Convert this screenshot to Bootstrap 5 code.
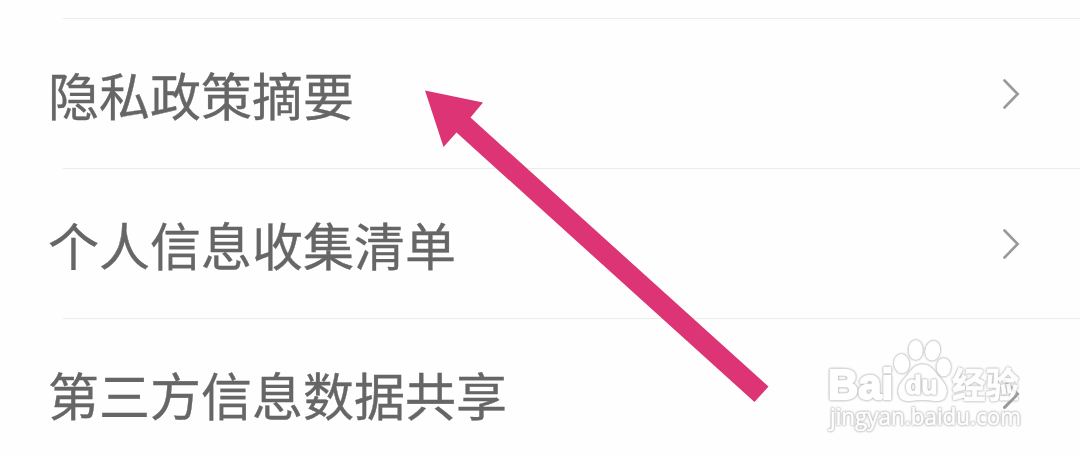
<!DOCTYPE html>
<html lang="zh-CN">
<head>
  <meta charset="UTF-8" />
  <meta name="viewport" content="width=device-width, initial-scale=1.0"/>
  <title>隐私设置</title>
  <link href="https://cdn.jsdelivr.net/npm/bootstrap@5.3.2/dist/css/bootstrap.min.css" rel="stylesheet">
  <style>
    body {
      background-color: #fefefe;
      font-family: "Noto Sans CJK SC", sans-serif;
    }
    .screen {
      height: 455px;
      padding-top: 18px;
    }
    .divider {
      height: 1px;
      margin-left: 63px;
      background-color: #ebebeb;
    }
    .setting {
      height: 149px;
      padding: 0 60px 0 48px;
      color: #666;
      font-size: 51px;
      line-height: 76px;
      -webkit-text-stroke: .35px #666;
    }
    .chevron {
      width: 18px;
      height: 30px;
    }
    .overlay {
      pointer-events: none;
    }
    .wm {
      fill: #fff;
      stroke: #fff;
      stroke-width: 1.4;
      stroke-linejoin: round;
      filter: drop-shadow(0 0 .8px #aaa) drop-shadow(0 0 .6px #ccc);
    }
    .wm-latin {
      font-family: "Liberation Sans", sans-serif;
      font-weight: 700;
    }
    .wm-brand {
      stroke-width: 2.4;
    }
    .wm-url {
      font-family: "Open Sans", sans-serif;
      font-weight: 500;
      stroke-width: .6;
    }
    .wm-cjk {
      font-family: "Noto Sans CJK SC", sans-serif;
      font-weight: 700;
      stroke-width: .8;
    }
  </style>
</head>
<body>
  <main class="screen position-relative overflow-hidden">
    <div class="divider"></div>
    <a href="#" class="setting d-flex align-items-center justify-content-between text-decoration-none">
      <span>隐私政策摘要</span>
      <svg class="chevron" viewBox="0 0 18 30" fill="none" stroke="#999" stroke-width="2.6" stroke-linecap="round"><path d="M2.500 1.500 15.700 15 2.500 28.500"/></svg>
    </a>
    <div class="divider"></div>
    <a href="#" class="setting d-flex align-items-center justify-content-between text-decoration-none">
      <span>个人信息收集清单</span>
      <svg class="chevron" viewBox="0 0 18 30" fill="none" stroke="#999" stroke-width="2.6" stroke-linecap="round"><path d="M2.500 1.500 15.700 15 2.500 28.500"/></svg>
    </a>
    <div class="divider"></div>
    <a href="#" class="setting d-flex align-items-center justify-content-between text-decoration-none">
      <span>第三方信息数据共享</span>
      <svg class="chevron" viewBox="0 0 18 30" fill="none" stroke="#999" stroke-width="2.6" stroke-linecap="round"><path d="M2.500 1.500 15.700 15 2.500 28.500"/></svg>
    </a>

    <!-- pointer arrow and watermark lie over the list -->
    <svg class="overlay position-absolute top-0 start-0" width="1080" height="455" viewBox="0 0 1080 455">
      <path fill="#dc3474" d="M425 90.500 483 102.500 470.500 117.500 768.500 386.500 754.500 402 456.500 132.500 443.500 147Z"/>
      <g class="wm">
        <text class="wm-latin wm-brand" x="828" y="399" font-size="43" textLength="65" lengthAdjust="spacingAndGlyphs">Bai</text>
      </g>
      <g class="wm">
        <ellipse cx="901.7" cy="363.7" rx="7" ry="9" transform="rotate(-8 901.7 363.7)"/>
        <ellipse cx="915.7" cy="350" rx="6.500" ry="9.300"/>
        <ellipse cx="932.7" cy="350.700" rx="6.800" ry="9.300" transform="rotate(12 932.7 350.7)"/>
        <ellipse cx="943.7" cy="367.300" rx="6.500" ry="8.500"/>
      </g>
      <g class="wm">
        <path d="M922.500 365C915 365 911 371 907.500 376C904 380 898.800 384 898.800 391C898.800 397 902 400.500 908 400.500C914 400.500 917 399.200 922.500 399.200C928 399.200 932 400.500 937 400.500C943 400.500 946.200 397 946.200 391C946.200 384 941 380 937.500 376C934 371 930 365 922.500 365Z"/>
      </g>
      <g class="wm">
        <text class="wm-latin" x="905.500" y="394" font-size="26" textLength="32" lengthAdjust="spacingAndGlyphs">du</text>
      </g>
      <g class="wm" opacity=".9">
        <text class="wm-cjk" x="952" y="397.500" font-size="35" textLength="67" lengthAdjust="spacingAndGlyphs">经验</text>
      </g>
      <g class="wm">
        <text class="wm-url" x="830" y="425" font-size="23" textLength="191" lengthAdjust="spacingAndGlyphs">jingyan.baidu.com</text>
      </g>
      <path d="M1016 396 1004.500 407.500" fill="none" stroke="#999" stroke-width="2.600" stroke-linecap="round"/>
    </svg>
  </main>
  <script src="https://cdn.jsdelivr.net/npm/bootstrap@5.3.2/dist/js/bootstrap.bundle.min.js"></script>
</body>
</html>
